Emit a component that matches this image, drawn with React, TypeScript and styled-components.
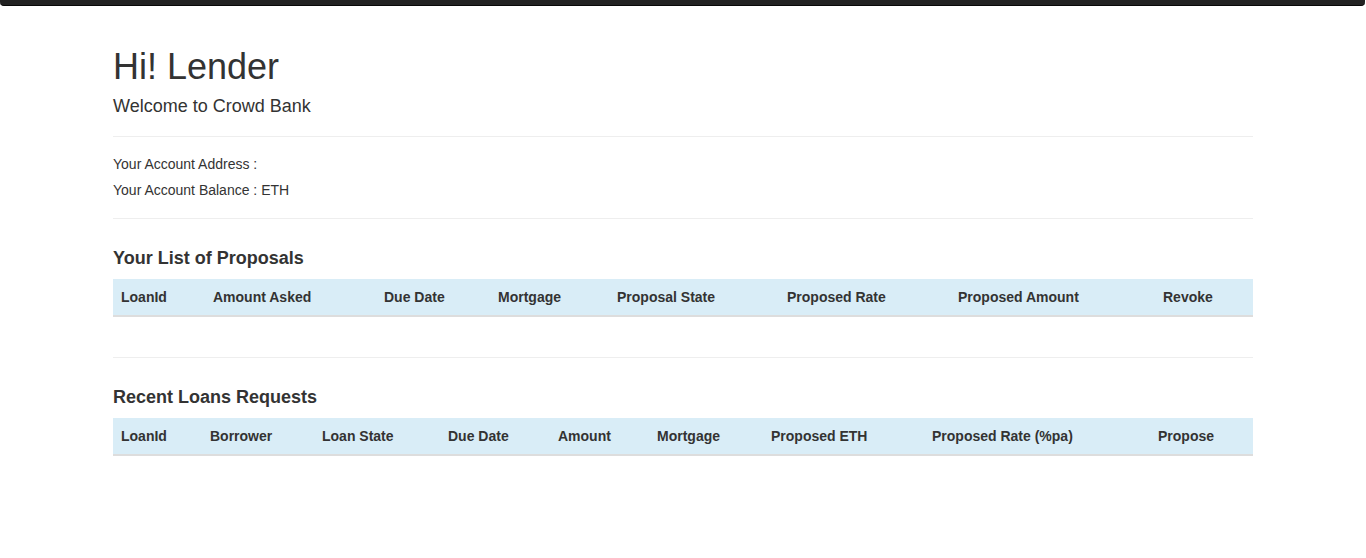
import styled, { createGlobalStyle } from "styled-components";

const GlobalStyle = createGlobalStyle`
  body {
    margin: 0;
    background: #fff;
    color: #333;
    font-family: "Liberation Sans", Arial, sans-serif;
    font-size: 14px;
    line-height: 1.42857;
  }
`;

const NavBar = styled.nav`
  height: 5px;
  background-color: #222;
  border-bottom: 1px solid #080808;
  border-radius: 0 0 4px 4px;
  margin: 0 1px 20px 0;
`;

const Container = styled.main`
  width: 1140px;
  margin: 0 auto;
  padding: 21px 15px 0;
`;

const Title = styled.h1`
  font-size: 36px;
  font-weight: 500;
  line-height: 1.1;
  margin: 0 0 10px;
`;

const Subtitle = styled.h4`
  font-size: 18px;
  font-weight: 500;
  line-height: 1.1;
  margin: 10px 0;
`;

const Divider = styled.hr`
  border: 0;
  border-top: 1px solid #eee;
  margin: 20px 0;
`;

const InfoLine = styled.h5`
  font-size: 14px;
  font-weight: 400;
  line-height: 1.1;
  margin: 10px 0;
`;

const Section = styled.section`
  padding-top: 8px;
`;

const SectionTitle = styled.h4`
  font-size: 18px;
  font-weight: 700;
  line-height: 1.1;
  margin: 2px 0 10px;
`;

const Table = styled.table`
  width: 100%;
  border-collapse: collapse;
  border-spacing: 0;
  margin-bottom: 40px;
  table-layout: fixed;
`;

const HeadRow = styled.tr`
  background-color: #d9edf7;
`;

const HeadCell = styled.th`
  box-sizing: border-box;
  padding: 8px;
  line-height: 20px;
  text-align: left;
  font-weight: 700;
  white-space: nowrap;
  border-bottom: 2px solid #ddd;
`;

type Column = { label: string; width: number };

const proposalColumns: Column[] = [
  { label: "LoanId", width: 92 },
  { label: "Amount Asked", width: 171 },
  { label: "Due Date", width: 114 },
  { label: "Mortgage", width: 119 },
  { label: "Proposal State", width: 170 },
  { label: "Proposed Rate", width: 171 },
  { label: "Proposed Amount", width: 205 },
  { label: "Revoke", width: 98 },
];

const requestColumns: Column[] = [
  { label: "LoanId", width: 89 },
  { label: "Borrower", width: 112 },
  { label: "Loan State", width: 126 },
  { label: "Due Date", width: 110 },
  { label: "Amount", width: 99 },
  { label: "Mortgage", width: 114 },
  { label: "Proposed ETH", width: 161 },
  { label: "Proposed Rate (%pa)", width: 226 },
  { label: "Propose", width: 103 },
];

const DataTable = ({ columns }: { columns: Column[] }) => (
  <Table>
    <thead>
      <HeadRow>
        {columns.map((c) => (
          <HeadCell key={c.label} style={{ width: c.width }}>
            {c.label}
          </HeadCell>
        ))}
      </HeadRow>
    </thead>
    <tbody></tbody>
  </Table>
);

const App = () => {
  return (
    <>
      <GlobalStyle />
      <NavBar />
      <Container>
        <Title>Hi! Lender</Title>
        <Subtitle>Welcome to Crowd Bank</Subtitle>
        <Divider />
        <InfoLine>Your Account Address : </InfoLine>
        <InfoLine>Your Account Balance : ETH</InfoLine>
        <Divider />

        <Section>
          <SectionTitle>Your List of Proposals</SectionTitle>
          <DataTable columns={proposalColumns} />
        </Section>
        <Divider />

        <Section>
          <SectionTitle>Recent Loans Requests</SectionTitle>
          <DataTable columns={requestColumns} />
        </Section>
      </Container>
    </>
  );
};

export default App;
